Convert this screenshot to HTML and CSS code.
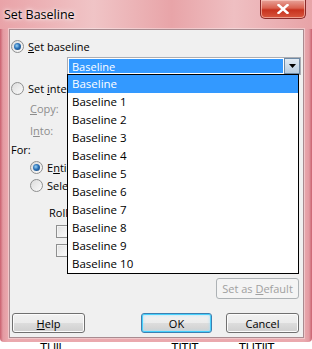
FILE: index.html
```html
<!DOCTYPE html>
<html lang="en">
<head>
<meta charset="utf-8">
<title>Set Baseline</title>
<link rel="stylesheet" href="styles.css">
</head>
<body>
<div class="window">
  <div class="titlebar">
    <span class="title">Set Baseline</span>
    <span class="close">
      <svg width="12" height="10" viewBox="0 0 12 10"><path d="M1.5 1l9 8M10.5 1l-9 8" stroke="#fff" stroke-width="2.4" stroke-linecap="square"/></svg>
    </span>
  </div>
  <div class="client">
    <div class="row r-base"><span class="radio on"></span><span><u>S</u>et baseline</span></div>
    <div class="combo">
      <span class="combo-val"><span class="sel">Baseline</span></span>
      <span class="combo-btn"><svg width="7" height="4" viewBox="0 0 7 4"><path d="M0 0h7L3.5 4z" fill="#000"/></svg></span>
    </div>
    <div class="row r-interim"><span class="radio"></span><span class="under">Set <u>i</u>nterim plan</span></div>
    <div class="row r-copy dim"><span><u>C</u>opy:</span></div>
    <div class="row r-into dim"><span>I<u>n</u>to:</span></div>
    <div class="row r-for"><span>For:</span></div>
    <div class="row r-entire"><span class="radio on"></span><span class="under">E<u>n</u>tire project</span></div>
    <div class="row r-sel"><span class="radio"></span><span class="under">Selec<u>t</u>ed tasks</span></div>
    <div class="row r-roll"><span class="under">Roll up baselines:</span></div>
    <div class="row r-cb1"><span class="check"></span><span class="under">To all summary tasks</span></div>
    <div class="row r-cb2"><span class="check"></span><span class="under">From subtasks</span></div>
    <div class="row r-default"><button class="btn" disabled>Set as <u>D</u>efault</button></div>
    <div class="row r-buttons">
      <button class="btn btn-help"><u>H</u>elp</button>
      <button class="btn btn-ok">OK</button>
      <button class="btn btn-cancel">Cancel</button>
    </div>

    <ul class="droplist">
      <li class="hl">Baseline</li>
      <li>Baseline 1</li>
      <li>Baseline 2</li>
      <li>Baseline 3</li>
      <li>Baseline 4</li>
      <li>Baseline 5</li>
      <li>Baseline 6</li>
      <li>Baseline 7</li>
      <li>Baseline 8</li>
      <li>Baseline 9</li>
      <li>Baseline 10</li>
    </ul>
  </div>
</div>
<div class="behind"><span class="b1">Tl lll</span><span class="b2">TlTlT</span><span class="b3">Tl lTllT</span></div>
</body>
</html>
```

FILE: styles.css
```css
*{margin:0;padding:0;box-sizing:border-box}
body{background:#fff;font-family:"Open Sans","Noto Sans",sans-serif;font-size:11px;color:#000;width:312px;height:349px;overflow:hidden}
u{text-decoration:underline;text-underline-offset:1px}

.window{position:relative;height:342px;display:flex;flex-direction:column;background:linear-gradient(90deg,#c9606e 0,#e49aa2 3px,#eaa9ae 8px,#eaa9ae 304px,#e39aa2 309px,#c9606e 312px);border-radius:0 0 4px 4px}
.titlebar{height:29px;display:flex;align-items:flex-start;justify-content:space-between;background:linear-gradient(90deg,#e9a3a8 0,#f0c4c6 30%,#e8a4a8 55%,#efbfc2 75%,#e8a3a7 100%)}
.title{margin:6px 0 0 4px;font-size:12.5px;color:#000;text-shadow:0 0 6px #fff,0 0 3px #fff}
.close{width:46px;height:19px;margin-right:6px;display:flex;align-items:center;justify-content:center;border:1px solid #8a2a2a;border-top:0;border-radius:0 0 5px 5px;background:linear-gradient(#e8a39a 0,#d9614f 45%,#c7321e 55%,#d8563e 100%);box-shadow:inset 0 0 0 1px rgba(255,210,200,.6)}

.client{position:relative;flex:1;margin:0 8px 4px 9px;border:1px solid #a98b90;background:#f0f0f0;box-shadow:0 0 0 1px rgba(255,255,255,.35)}
.row{display:flex;align-items:center;gap:4px;height:14px;white-space:nowrap}
.under{max-width:60px;overflow:hidden}
.dim{color:#8d8d8d}
.r-base{margin:9px 0 0 1px}
.r-interim{margin:6px 0 0 1px}
.r-copy{margin:6px 0 0 20px}
.r-into{margin:8px 0 0 20px}
.r-for{margin:5px 0 0 1px}
.r-entire{margin:4px 0 0 20px}
.r-sel{margin:4px 0 0 20px}
.r-roll{margin:13px 0 0 39px}
.r-cb1{margin:6px 0 0 46px;height:13px}
.r-cb2{margin:6px 0 0 46px;height:13px}
.r-default{height:21px;margin:21px 4px 0 0;justify-content:flex-end}
.r-buttons{height:20px;margin:14px 4px 0 2px;justify-content:space-between;gap:0}

.radio{flex:none;position:relative;width:13px;height:13px;border-radius:50%;border:1px solid #8e8f8f;background:linear-gradient(135deg,#dcdcdc,#fbfbfb)}
.radio.on::after{content:"";position:absolute;left:2px;top:2px;width:7px;height:7px;border-radius:50%;background:radial-gradient(circle at 40% 40%,#9ad4f6 0,#2a70b6 45%,#173f6d 100%)}
.check{flex:none;width:13px;height:13px;border:1px solid #8e8f8f;background:linear-gradient(135deg,#e0e0e0,#fdfdfd);box-shadow:inset 0 0 0 1px #f4f4f4}

.combo{display:flex;width:234px;height:18px;margin:4px 0 0 57px;border:1px solid #abadb3;background:#fff}
.combo-val{flex:1;padding:1px}
.sel{display:flex;align-items:center;height:100%;padding-left:3px;background:#3399ff;color:#fff}
.combo-btn{width:16px;display:flex;align-items:center;justify-content:center;border:1px solid #6e8aa6;background:linear-gradient(#e2ebf4,#b9cde0)}

.droplist{position:absolute;left:57px;top:44px;width:232px;height:200px;list-style:none;border:1px solid #000;background:#fff;font-size:11.5px}
.droplist li{height:18px;line-height:18px;padding-left:4px}
.droplist li.hl{background:#3399ff;color:#fff}

.btn{height:100%;font:inherit;color:#000;border:1px solid #707070;border-radius:3px;background:linear-gradient(#f2f2f2 0,#ebebeb 50%,#dddddd 51%,#cfcfcf 100%);box-shadow:inset 0 0 0 1px #fcfcfc}
.btn[disabled]{width:83px;color:#a0a0a0;border-color:#adb2b5;background:#f4f4f4;box-shadow:none}
.btn-help{width:73px}
.btn-ok{width:71px;margin-left:auto;margin-right:14px;border-color:#3c7fb1;box-shadow:inset 0 0 0 1px #48d0fc,inset 0 0 3px 1px #a8e0f8}
.btn-cancel{width:73px}

.behind{display:flex;height:7px;overflow:hidden;font-size:12px;line-height:12px;font-family:"Liberation Sans",sans-serif}
.b1{margin-left:40px}
.b2{margin-left:110px}
.b3{margin-left:40px}
```
